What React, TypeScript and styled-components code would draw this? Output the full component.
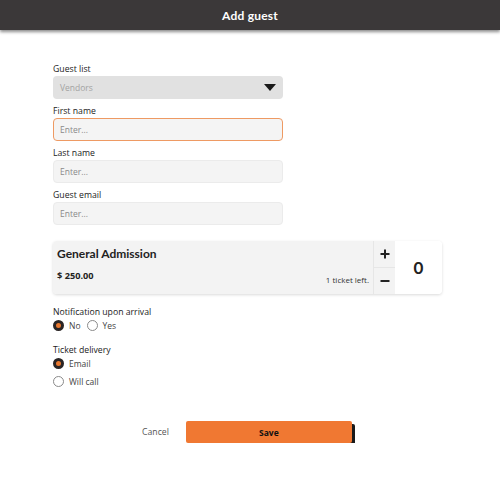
import styled, { createGlobalStyle } from 'styled-components';

const GlobalStyle = createGlobalStyle`
    body {
        margin: 0;
        background: #fff;
        font-family: "Open Sans", "Liberation Sans", sans-serif;
        color: #222;
    }
`

const Header = styled.header`
    height: 30px;
    background-color: #3b3839;
    box-shadow: 0 2px 3px rgba(0, 0, 0, 0.45);
    display: flex;
    align-items: center;
    justify-content: center;
    color: #fff;
    font-family: Lato, "Liberation Sans", sans-serif;
    font-weight: 700;
    font-size: 12px;
    letter-spacing: 0.2px;
`

const Form = styled.div`
    padding: 33px 0 0 53px;
`

const Field = styled.div`
    width: 230px;
    margin-bottom: 6px;
`

const Label = styled.div`
    font-size: 8.7px;
    line-height: 12px;
    color: #222;
    margin-bottom: 1px;
`

const Select = styled.div`
    height: 23px;
    box-sizing: border-box;
    background: #e1e1e1;
    border-radius: 4px;
    display: flex;
    align-items: center;
    justify-content: space-between;
    padding: 0 7px;
    font-size: 8.5px;
    color: #a3a3a3;
`

const Caret = styled.span`
    width: 0;
    height: 0;
    border-left: 6px solid transparent;
    border-right: 6px solid transparent;
    border-top: 7px solid #1a1a1a;
`

const Input = styled.div<{ $focused?: boolean }>`
    height: 23px;
    box-sizing: border-box;
    background: #f4f4f4;
    border: 1px solid ${p => (p.$focused ? '#ee9a63' : '#ebebeb')};
    border-radius: 4px;
    display: flex;
    align-items: center;
    padding: 0 6px;
    font-size: 8.5px;
    color: #8a8a8a;
`

const Card = styled.div`
    margin-top: 16px;
    width: 389px;
    height: 53px;
    display: flex;
    border-radius: 4px;
    box-shadow: 0 1px 3px rgba(0, 0, 0, 0.15);
    overflow: hidden;
`

const CardInfo = styled.div`
    flex: 1;
    background: #f3f3f3;
    padding: 5px 4px 0 4px;
    display: flex;
    flex-direction: column;
`

const TicketName = styled.div`
    font-family: Lato, "Liberation Sans", sans-serif;
    font-weight: 700;
    font-size: 12px;
    line-height: 16px;
`

const PriceRow = styled.div`
    display: flex;
    justify-content: space-between;
    align-items: flex-end;
    margin-top: 7px;
`

const Price = styled.div`
    font-weight: 700;
    font-size: 9.2px;
`

const Left = styled.div`
    font-size: 8px;
    color: #333;
    margin-bottom: -3px;
`

const Stepper = styled.div`
    width: 21px;
    display: flex;
    flex-direction: column;
    background: #f3f3f3;
    border-left: 1px solid #e6e6e6;
`

const StepButton = styled.div<{ $top?: boolean }>`
    flex: 1;
    display: flex;
    align-items: center;
    justify-content: center;
    border-bottom: ${p => (p.$top ? '1px solid #e6e6e6' : 'none')};
`

const Count = styled.div`
    width: 47px;
    background: #fff;
    display: flex;
    align-items: center;
    justify-content: center;
    font-family: Lato, "Liberation Sans", sans-serif;
    font-weight: 700;
    font-size: 17px;
`

const Group = styled.div<{ $gap: number }>`
    margin-top: ${p => p.$gap}px;
`

const RadioRow = styled.div`
    display: flex;
    gap: 6px;
`

const RadioItem = styled.label`
    display: flex;
    align-items: center;
    gap: 5px;
    height: 12px;
    font-size: 8.5px;
    color: #444;
`

const RadioCol = styled.div`
    display: flex;
    flex-direction: column;
    gap: 6px;
`

const Dot = styled.span<{ $checked?: boolean }>`
    width: 11px;
    height: 11px;
    box-sizing: border-box;
    border-radius: 50%;
    border: ${p => (p.$checked ? '3.5px solid #2a2525' : '1px solid #8a8a8a')};
    background: ${p => (p.$checked ? '#e8782f' : '#fff')};
`

const Actions = styled.div`
    display: flex;
    align-items: flex-start;
    gap: 17px;
    margin-top: 34px;
    padding-left: 89px;
`

const Cancel = styled.span`
    font-size: 8.7px;
    line-height: 22px;
    color: #555;
`

const Save = styled.button`
    width: 166px;
    height: 22px;
    padding: 0;
    border: none;
    border-radius: 2px;
    background: #f07832;
    box-shadow: 3px 3px 0 #1a1a1a;
    font-family: "Open Sans", "Liberation Sans", sans-serif;
    font-weight: 700;
    font-size: 8.5px;
    color: #111;
`

const Plus = () => (
    <svg width="10" height="10" viewBox="0 0 10 10">
        <path d="M5 0.5v9M0.5 5h9" stroke="#222" strokeWidth="2" />
    </svg>
)

const Minus = () => (
    <svg width="10" height="10" viewBox="0 0 10 10">
        <path d="M0.5 5h9" stroke="#222" strokeWidth="2" />
    </svg>
)

const App = () => {
    return (
        <>
            <GlobalStyle />
            <Header>Add guest</Header>
            <Form>
                <Field>
                    <Label>Guest list</Label>
                    <Select>
                        Vendors
                        <Caret />
                    </Select>
                </Field>
                <Field>
                    <Label>First name</Label>
                    <Input $focused>Enter...</Input>
                </Field>
                <Field>
                    <Label>Last name</Label>
                    <Input>Enter...</Input>
                </Field>
                <Field>
                    <Label>Guest email</Label>
                    <Input>Enter...</Input>
                </Field>

                <Card>
                    <CardInfo>
                        <TicketName>General Admission</TicketName>
                        <PriceRow>
                            <Price>$ 250.00</Price>
                            <Left>1 ticket left.</Left>
                        </PriceRow>
                    </CardInfo>
                    <Stepper>
                        <StepButton $top><Plus /></StepButton>
                        <StepButton><Minus /></StepButton>
                    </Stepper>
                    <Count>0</Count>
                </Card>

                <Group $gap={12}>
                    <Label>Notification upon arrival</Label>
                    <RadioRow>
                        <RadioItem><Dot $checked />No</RadioItem>
                        <RadioItem><Dot />Yes</RadioItem>
                    </RadioRow>
                </Group>

                <Group $gap={13}>
                    <Label>Ticket delivery</Label>
                    <RadioCol>
                        <RadioItem><Dot $checked />Email</RadioItem>
                        <RadioItem><Dot />Will call</RadioItem>
                    </RadioCol>
                </Group>

                <Actions>
                    <Cancel>Cancel</Cancel>
                    <Save>Save</Save>
                </Actions>
            </Form>
        </>
    )
}

export default App
